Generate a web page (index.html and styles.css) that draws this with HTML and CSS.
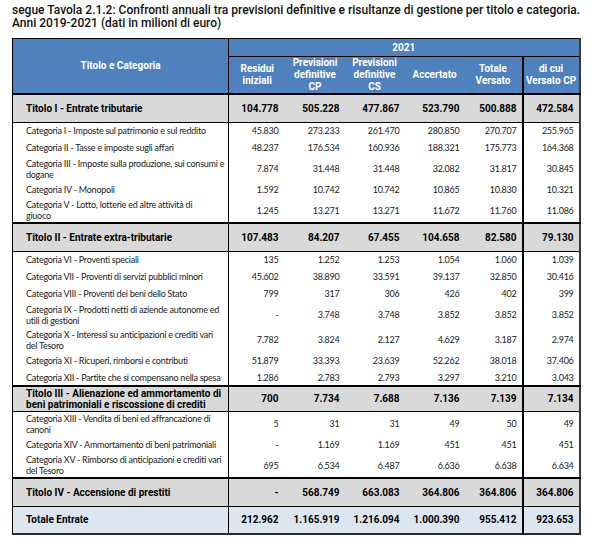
FILE: index.html
```html
<!DOCTYPE html>
<html lang="it">
<head>
<meta charset="utf-8">
<title>Tavola 2.1.2</title>
<link rel="stylesheet" href="styles.css">
</head>
<body>
<div class="page">
  <h1 class="caption">segue Tavola 2.1.2: Confronti annuali tra previsioni definitive e risultanze di gestione per titolo e categoria.<br>Anni 2019-2021 (dati in milioni di euro)</h1>
  <table class="tav">
    <colgroup>
      <col class="c-title">
      <col class="c-a">
      <col class="c-b">
      <col class="c-c">
      <col class="c-d">
      <col class="c-e">
      <col class="c-f">
    </colgroup>
    <thead>
      <tr class="h1">
        <th rowspan="2" class="h-title">Titolo e Categoria</th>
        <th colspan="6" class="h-year">2021</th>
      </tr>
      <tr class="h2">
        <th>Residui<br>iniziali</th>
        <th>Previsioni<br>definitive<br>CP</th>
        <th>Previsioni<br>definitive<br>CS</th>
        <th>Accertato</th>
        <th>Totale<br>Versato</th>
        <th class="sep">di cui<br>Versato CP</th>
      </tr>
    </thead>
    <tbody>
      <tr class="tit"><td>Titolo I - Entrate tributarie</td><td>104.778</td><td>505.228</td><td>477.867</td><td>523.790</td><td>500.888</td><td class="sep">472.584</td></tr>
      <tr class="cat"><td>Categoria I - Imposte sul patrimonio e sul reddito</td><td>45.830</td><td>273.233</td><td>261.470</td><td>280.850</td><td>270.707</td><td class="sep">255.965</td></tr>
      <tr class="cat"><td>Categoria II - Tasse e imposte sugli affari</td><td>48.237</td><td>176.534</td><td>160.936</td><td>188.321</td><td>175.773</td><td class="sep">164.368</td></tr>
      <tr class="cat two"><td>Categoria III - Imposte sulla produzione, sui consumi e<br>dogane</td><td>7.874</td><td>31.448</td><td>31.448</td><td>32.082</td><td>31.817</td><td class="sep">30.845</td></tr>
      <tr class="cat"><td>Categoria IV - Monopoli</td><td>1.592</td><td>10.742</td><td>10.742</td><td>10.865</td><td>10.830</td><td class="sep">10.321</td></tr>
      <tr class="cat two"><td>Categoria V - Lotto, lotterie ed altre attività di<br>giuoco</td><td>1.245</td><td>13.271</td><td>13.271</td><td>11.672</td><td>11.760</td><td class="sep">11.086</td></tr>
      <tr class="tit"><td>Titolo II - Entrate extra-tributarie</td><td>107.483</td><td>84.207</td><td>67.455</td><td>104.658</td><td>82.580</td><td class="sep">79.130</td></tr>
      <tr class="cat"><td>Categoria VI - Proventi speciali</td><td>135</td><td>1.252</td><td>1.253</td><td>1.054</td><td>1.060</td><td class="sep">1.039</td></tr>
      <tr class="cat"><td>Categoria VII - Proventi di servizi pubblici minori</td><td>45.602</td><td>38.890</td><td>33.591</td><td>39.137</td><td>32.850</td><td class="sep">30.416</td></tr>
      <tr class="cat"><td>Categoria VIII - Proventi dei beni dello Stato</td><td>799</td><td>317</td><td>306</td><td>426</td><td>402</td><td class="sep">399</td></tr>
      <tr class="cat two"><td>Categoria IX - Prodotti netti di aziende autonome ed<br>utili di gestioni</td><td>-</td><td>3.748</td><td>3.748</td><td>3.852</td><td>3.852</td><td class="sep">3.852</td></tr>
      <tr class="cat two"><td>Categoria X - Interessi su anticipazioni e crediti vari<br>del Tesoro</td><td>7.782</td><td>3.824</td><td>2.127</td><td>4.629</td><td>3.187</td><td class="sep">2.974</td></tr>
      <tr class="cat"><td>Categoria XI - Ricuperi, rimborsi e contributi</td><td>51.879</td><td>33.393</td><td>23.639</td><td>52.262</td><td>38.018</td><td class="sep">37.406</td></tr>
      <tr class="cat"><td>Categoria XII - Partite che si compensano nella spesa</td><td>1.286</td><td>2.783</td><td>2.793</td><td>3.297</td><td>3.210</td><td class="sep">3.043</td></tr>
      <tr class="tit two"><td>Titolo III - Alienazione ed ammortamento di<br>beni patrimoniali e riscossione di crediti</td><td>700</td><td>7.734</td><td>7.688</td><td>7.136</td><td>7.139</td><td class="sep">7.134</td></tr>
      <tr class="cat two"><td>Categoria XIII - Vendita di beni ed affrancazione di<br>canoni</td><td>5</td><td>31</td><td>31</td><td>49</td><td>50</td><td class="sep">49</td></tr>
      <tr class="cat"><td>Categoria XIV - Ammortamento di beni patrimoniali</td><td>-</td><td>1.169</td><td>1.169</td><td>451</td><td>451</td><td class="sep">451</td></tr>
      <tr class="cat two"><td>Categoria XV - Rimborso di anticipazioni e crediti vari<br>del Tesoro</td><td>695</td><td>6.534</td><td>6.487</td><td>6.636</td><td>6.638</td><td class="sep">6.634</td></tr>
      <tr class="tit"><td>Titolo IV - Accensione di prestiti</td><td>-</td><td>568.749</td><td>663.083</td><td>364.806</td><td>364.806</td><td class="sep">364.806</td></tr>
      <tr class="tot"><td>Totale Entrate</td><td>212.962</td><td>1.165.919</td><td>1.216.094</td><td>1.000.390</td><td>955.412</td><td class="sep">923.653</td></tr>
    </tbody>
  </table>
</div>
</body>
</html>
```

FILE: styles.css
```css
html, body {
  margin: 0;
  padding: 0;
  background: #ffffff;
}

.page {
  padding: 4px 0 0 12px;
  width: 567px;
}

.caption {
  margin: 0 0 8px 0;
  font-family: Roboto, "Liberation Sans", sans-serif;
  font-weight: 500;
  font-size: 12px;
  line-height: 13px;
  color: #111111;
  white-space: nowrap;
}

.tav {
  width: 567px;
  border-collapse: collapse;
  table-layout: fixed;
  border-left: 1px solid #000000;
  border-top: 1px solid #000000;
  border-right: 2px solid #3a3a3a;
  border-bottom: 2px solid #2a2a2a;
}

.c-title { width: 216px; }
.c-a { width: 57px; }
.c-b { width: 59px; }
.c-c { width: 60px; }
.c-d { width: 60px; }
.c-e { width: 58px; }
.c-f { width: 57px; }

.tav th {
  background: #4f81bd;
  color: #ffffff;
  font-family: Roboto, "Liberation Sans", sans-serif;
  font-weight: 700;
  font-size: 10px;
  line-height: 12px;
  text-align: center;
  vertical-align: middle;
  padding: 0;
}

.tav .h-title {
  border-right: 1px solid #000000;
}

.tav .h1 { height: 18px; }
.tav .h-year { border-bottom: 1px solid #000000; }
.tav .h2 { height: 36px; }

.tav td {
  font-family: Lato, "Liberation Sans", sans-serif;
  font-size: 9px;
  letter-spacing: -0.25px;
  line-height: 11px;
  color: #1a1a1a;
  text-align: right;
  vertical-align: middle;
  padding: 0 5px 0 0;
  white-space: nowrap;
}

.tav td:first-child {
  text-align: left;
  padding: 0 0 0 13px;
  border-right: 1px solid #000000;
  overflow: hidden;
}

.tav td:nth-child(2) { padding-right: 7px; }

.tav .sep {
  border-left: 2px solid #000000;
}

.tav .cat { height: 17px; }
.tav .cat.two { height: 25px; }

.tav .tit {
  height: 28px;
  background: #d9d9d9;
  border-top: 2px solid #000000;
  border-bottom: 1px solid #000000;
}

.tav .tit.two { height: 25px; }

.tav .tit td,
.tav .tot td {
  font-family: Roboto, "Liberation Sans", sans-serif;
  font-weight: 700;
  font-size: 10px;
  letter-spacing: 0;
  line-height: 11px;
  color: #000000;
}

.tav .tot {
  height: 28px;
  background: #dce6f1;
  border-top: 1px solid #000000;
}
```
